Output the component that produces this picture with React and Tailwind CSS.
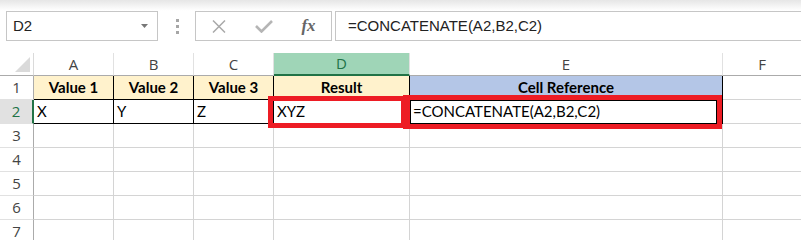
const cellFont = "font-['Lato',sans-serif] text-[15px] text-black";
const headFont = "font-['Open_Sans',sans-serif] text-[15px]";

function ColHead({ label, active, last }) {
  return (
    <div
      className={`h-[23px] flex items-center justify-center border-b ${headFont} ${
        last ? '' : 'border-r border-r-[#e1e1e1]'
      } ${
        active
          ? 'bg-[#9fd5b7] text-[#217346] border-b-2 border-b-[#217346]'
          : 'bg-white text-[#444] border-b-[#ababab]'
      }`}
    >
      {label}
    </div>
  );
}

function RowHead({ n, active }) {
  return (
    <div
      className={`h-[24px] flex items-center justify-center border-b border-b-[#e1e1e1] ${headFont} ${
        active
          ? 'bg-[#e1e1e1] text-[#217346] border-r-2 border-r-[#217346]'
          : 'bg-white text-[#444] border-r border-r-[#ababab]'
      }`}
    >
      {n}
    </div>
  );
}

function Cell({ children, className = '' }) {
  return (
    <div className={`h-[24px] flex items-center border-r border-b overflow-hidden whitespace-nowrap ${cellFont} ${className}`}>
      {children}
    </div>
  );
}

export default function App() {
  const emptyRows = [3, 4, 5, 6, 7, 8];

  return (
    <div className="w-[801px] h-[240px] overflow-hidden bg-white relative">
      {/* formula bar */}
      <div className="h-[53px] bg-linear-to-b from-[#e6e6e6] to-white to-20% flex items-start pt-[11px] pl-[6px]">
        <div className="w-[152px] h-[30px] border border-[#c6c6c6] bg-white flex items-center justify-between pl-[6px] pr-[9px] font-['Liberation_Sans',sans-serif] text-[15px] text-[#222]">
          <span>D2</span>
          <svg width="7" height="4" viewBox="0 0 7 4">
            <polygon points="0,0 7,0 3.5,4" fill="#777" />
          </svg>
        </div>
        <div className="ml-[18px] h-[30px] flex flex-col justify-center gap-[3px]">
          <div className="w-[3px] h-[3px] bg-[#a6a6a6]" />
          <div className="w-[3px] h-[3px] bg-[#a6a6a6]" />
          <div className="w-[3px] h-[3px] bg-[#a6a6a6]" />
        </div>
        <div className="ml-[16px] w-[137px] h-[30px] border border-[#c6c6c6] bg-white flex items-center">
          <div className="w-[45px] flex justify-center">
            <svg width="14" height="13" viewBox="0 0 14 13">
              <path d="M1 0.5 L13 12.5 M13 0.5 L1 12.5" stroke="#a9a9a9" strokeWidth="1.5" fill="none" />
            </svg>
          </div>
          <div className="w-[45px] flex justify-center">
            <svg width="18" height="13" viewBox="0 0 18 13">
              <path d="M1 6 L6.5 11.5 L17 1" stroke="#b5b5b5" strokeWidth="2.6" fill="none" />
            </svg>
          </div>
          <div className="w-[45px] flex justify-center font-['Liberation_Serif',serif] italic font-bold text-[17px] text-[#666] leading-none pb-[2px]">
            fx
          </div>
        </div>
        <div className="ml-[3px] flex-1 h-[30px] border border-r-0 border-[#c6c6c6] bg-white flex items-center pl-[12px] font-['Liberation_Sans',sans-serif] text-[15px] text-[#222]">
          =CONCATENATE(A2,B2,C2)
        </div>
      </div>

      {/* sheet */}
      <div className="relative">
        <div className="grid grid-cols-[34px_80px_80px_80px_136px_313px_1fr] border-[#d4d4d4]">
          {/* column headers */}
          <div className="h-[23px] relative bg-white border-r border-b border-r-[#dadada] border-b-[#ababab]">
            <svg className="absolute right-[3px] bottom-[3px]" width="15" height="15" viewBox="0 0 15 15">
              <polygon points="0,15 15,15 15,0" fill="#dadada" />
            </svg>
          </div>
          <ColHead label="A" />
          <ColHead label="B" />
          <ColHead label="C" />
          <ColHead label="D" active />
          <ColHead label="E" />
          <ColHead label="F" last />

          {/* row 1 */}
          <RowHead n={1} />
          <Cell className="justify-center font-bold bg-[#fff2cc] border-black">Value 1</Cell>
          <Cell className="justify-center font-bold bg-[#fff2cc] border-black">Value 2</Cell>
          <Cell className="justify-center font-bold bg-[#fff2cc] border-black">Value 3</Cell>
          <Cell className="justify-center font-bold bg-[#fff2cc] border-black">Result</Cell>
          <Cell className="justify-center font-bold bg-[#b4c6e7] border-black">Cell Reference</Cell>
          <Cell className="border-[#d4d4d4] border-r-0" />

          {/* row 2 */}
          <RowHead n={2} active />
          <Cell className="pl-[3px] border-black">X</Cell>
          <Cell className="pl-[3px] border-black">Y</Cell>
          <Cell className="pl-[3px] border-black">Z</Cell>
          <Cell className="pl-[3px] border-black">XYZ</Cell>
          <Cell className="pl-[3px] border-black">=CONCATENATE(A2,B2,C2)</Cell>
          <Cell className="border-[#d4d4d4] border-r-0" />

          {emptyRows.map((n) => (
            <div key={n} className="contents">
              <RowHead n={n} />
              <Cell className="border-[#d4d4d4]" />
              <Cell className="border-[#d4d4d4]" />
              <Cell className="border-[#d4d4d4]" />
              <Cell className="border-[#d4d4d4]" />
              <Cell className="border-[#d4d4d4]" />
              <Cell className="border-[#d4d4d4] border-r-0" />
            </div>
          ))}
        </div>

        {/* red highlight boxes */}
        <div className="absolute left-[268px] top-[43px] w-[138px] h-[32px] border-[5px] border-[#ed1c24]" />
        <div className="absolute left-[403px] top-[42px] w-[319px] h-[34px] border-[5px] border-l-[7px] border-[#ed1c24]">
          <div className="w-full h-full border border-black" />
        </div>
      </div>
    </div>
  );
}
